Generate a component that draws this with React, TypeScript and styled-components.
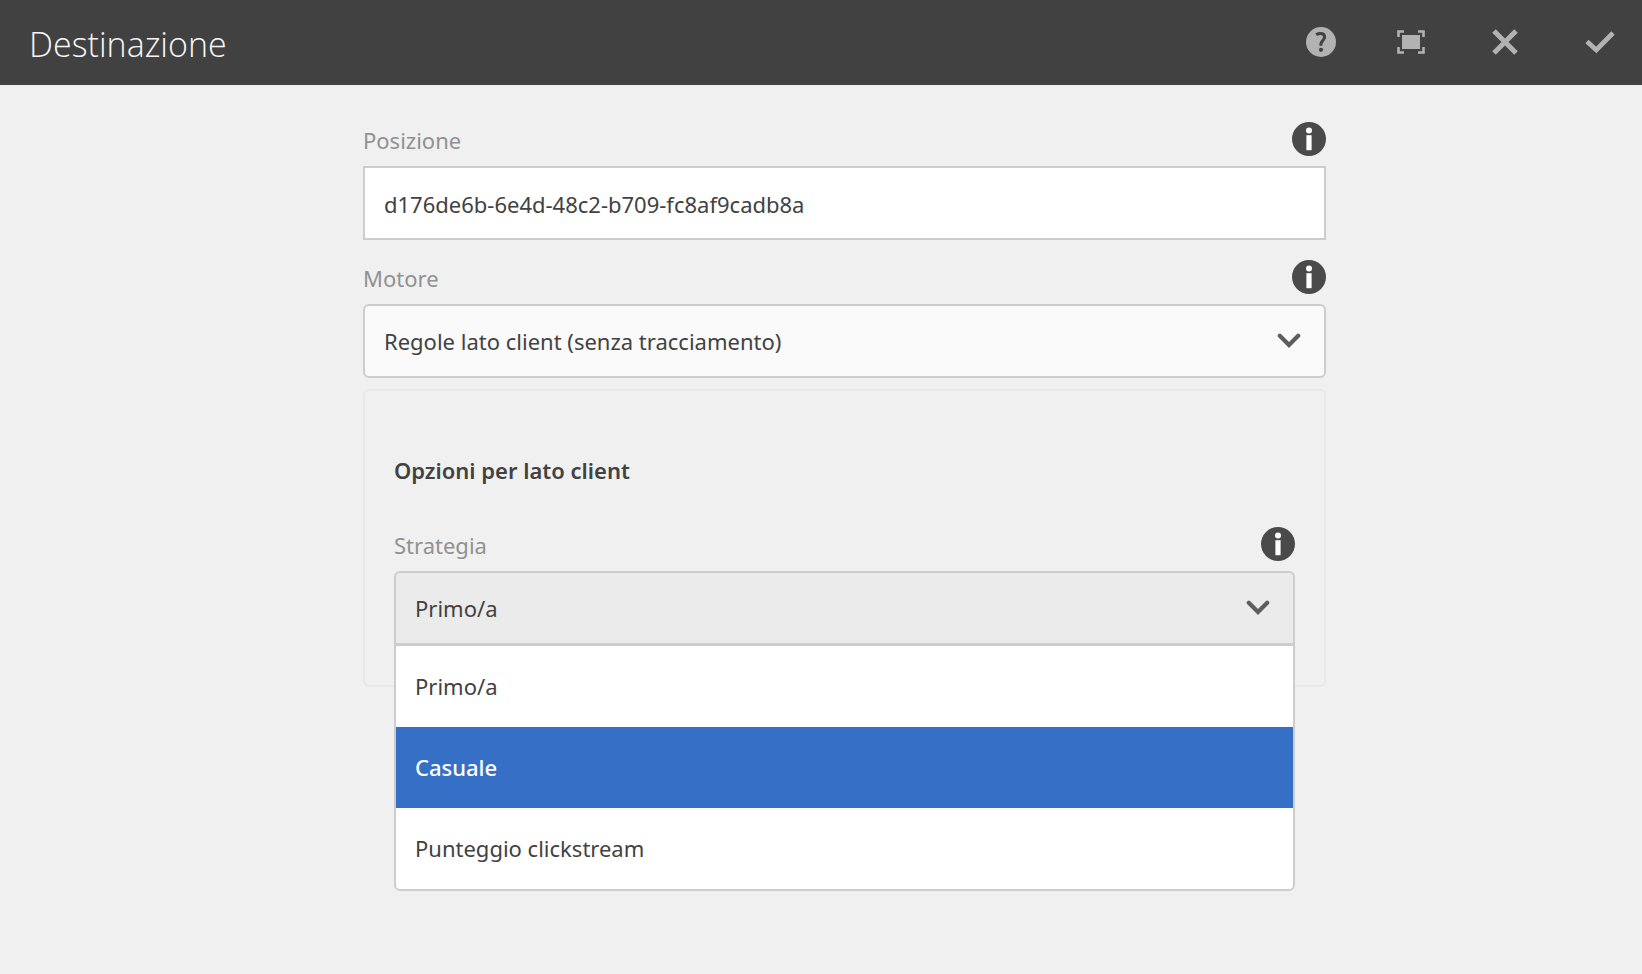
import React, { useState } from "react";
import styled, { createGlobalStyle } from "styled-components";

const GlobalStyle = createGlobalStyle`
  *, *::before, *::after { box-sizing: border-box; }
  body {
    margin: 0;
    background: #f0f0f0;
    color: #424242;
    font-family: "Noto Sans", "Open Sans", sans-serif;
    font-size: 22px;
    line-height: 30px;
  }
`;

const Page = styled.div`
  min-height: 100vh;
`;

const Header = styled.header`
  display: flex;
  align-items: center;
  justify-content: space-between;
  height: 85px;
  padding: 0 27px 2px 29px;
  background: #414141;
`;

const Title = styled.h1`
  margin: 0;
  padding-top: 4px;
  color: #f6f6f6;
  font-family: "Open Sans", "Noto Sans", sans-serif;
  font-size: 34px;
  font-weight: 300;
  line-height: 48px;
`;

const Actions = styled.div<{ $gap: number }>`
  display: flex;
  align-items: center;
  gap: ${({ $gap }) => $gap}px;
`;

const IconButton = styled.button`
  display: flex;
  padding: 0;
  border: 0;
  background: none;
  color: #b2b2b2;
  cursor: pointer;
`;

const Form = styled.form`
  display: flex;
  flex-direction: column;
  padding: 37px 316px 0 363px;
`;

const Field = styled.div`
  margin-bottom: 20px;
`;

const LabelRow = styled.div`
  display: flex;
  align-items: flex-start;
  justify-content: space-between;
  height: 44px;
`;

const Label = styled.label`
  padding-top: 3px;
  color: #919191;
`;

const InfoButton = styled(IconButton)`
  color: #4a4a4a;
`;

const TextInput = styled.input`
  display: block;
  width: 100%;
  height: 74px;
  padding: 2px 19px 0;
  border: 2px solid #cdcdcd;
  border-radius: 0;
  background: #fff;
  color: #424242;
  font: inherit;
  outline: none;
`;

const SelectBox = styled.div`
  position: relative;
  display: grid;
  align-items: center;

  > select,
  > svg {
    grid-area: 1 / 1;
  }

  > svg {
    justify-self: end;
    margin-right: 25px;
    pointer-events: none;
  }
`;

const Select = styled.select<{ $open?: boolean }>`
  width: 100%;
  height: 74px;
  padding: 0 56px 0 19px;
  border: 2px solid #cdcdcd;
  border-radius: ${({ $open }) => ($open ? "6px 6px 0 0" : "6px")};
  background: ${({ $open }) => ($open ? "#ebebeb" : "#fafafa")};
  color: #424242;
  font: inherit;
  appearance: none;
  outline: none;
`;

const Menu = styled.ul`
  position: absolute;
  top: 73px;
  left: 0;
  right: 0;
  margin: 0;
  padding: 0;
  border: 2px solid #cdcdcd;
  border-radius: 0 0 6px 6px;
  background: #fff;
  list-style: none;
`;

const Option = styled.li<{ $active: boolean }>`
  display: flex;
  align-items: center;
  height: 81px;
  padding: 0 19px 2px;
  background: ${({ $active }) => ($active ? "#3570c6" : "transparent")};
  color: ${({ $active }) => ($active ? "#fff" : "inherit")};
  font-weight: ${({ $active }) => ($active ? 500 : 400)};
  cursor: pointer;
`;

const Panel = styled.section`
  margin-top: -9px;
  padding: 64px 29px 20px;
  border: 2px solid #e8e8e8;
  border-radius: 6px;
`;

const PanelTitle = styled.h2`
  margin: 0 0 42px;
  font-size: 22px;
  font-weight: 600;
  line-height: 30px;
`;

const HelpIcon = () => (
  <svg width="30" height="30" viewBox="0 0 30 30" aria-hidden="true">
    <circle cx="15" cy="15" r="15" fill="currentColor" />
    <path
      d="M10.2 7.8C11.4 7 12.9 6.6 14.5 6.6C17.1 6.6 18.6 8 18.6 10.1C18.6 13.3 14.9 13.9 14.9 17.2V18.8"
      fill="none"
      stroke="#414141"
      strokeWidth="3"
    />
    <circle cx="15" cy="22.8" r="2.1" fill="#414141" />
  </svg>
);

const FullscreenIcon = () => (
  <svg width="28" height="24" viewBox="0 0 28 24" aria-hidden="true">
    <rect x="5" y="5" width="18" height="14" fill="currentColor" />
    <path
      d="M1.5 7V1.5H7M21 1.5H26.5V7M26.5 17V22.5H21M7 22.5H1.5V17"
      fill="none"
      stroke="currentColor"
      strokeWidth="2.6"
    />
  </svg>
);

const CloseIcon = () => (
  <svg width="26" height="26" viewBox="0 0 26 26" aria-hidden="true">
    <path d="M2 2L24 24M24 2L2 24" stroke="currentColor" strokeWidth="5" />
  </svg>
);

const CheckIcon = () => (
  <svg width="30" height="24" viewBox="0 0 30 24" aria-hidden="true">
    <path d="M2 11.5L11.3 20L28 3" fill="none" stroke="currentColor" strokeWidth="4.8" />
  </svg>
);

const InfoIcon = () => (
  <svg width="34" height="34" viewBox="0 0 34 34" aria-hidden="true">
    <circle cx="17" cy="17" r="17" fill="currentColor" />
    <circle cx="17" cy="8.4" r="3" fill="#fff" />
    <rect x="14.4" y="13.2" width="5.2" height="15" fill="#fff" />
  </svg>
);

const Chevron = () => (
  <svg width="24" height="16" viewBox="0 0 24 16" aria-hidden="true">
    <path
      d="M2.8 2.8L12 12L21.2 2.8"
      fill="none"
      stroke="#5e5e5e"
      strokeWidth="4.2"
      strokeLinecap="round"
    />
  </svg>
);

const FieldLabel = ({ id, children }: { id: string; children: string }) => (
  <LabelRow>
    <Label htmlFor={id}>{children}</Label>
    <InfoButton type="button" aria-label={`Informazioni: ${children}`}>
      <InfoIcon />
    </InfoButton>
  </LabelRow>
);

const strategies = ["Primo/a", "Casuale", "Punteggio clickstream"];

export default function App() {
  const [position, setPosition] = useState("d176de6b-6e4d-48c2-b709-fc8af9cadb8a");
  const [strategy, setStrategy] = useState(strategies[0]);
  const [active, setActive] = useState(1);

  return (
    <Page>
      <GlobalStyle />
      <Header>
        <Title>Destinazione</Title>
        <Actions $gap={67}>
          <Actions $gap={61}>
            <IconButton type="button" aria-label="Aiuto">
              <HelpIcon />
            </IconButton>
            <IconButton type="button" aria-label="Schermo intero">
              <FullscreenIcon />
            </IconButton>
          </Actions>
          <IconButton type="button" aria-label="Annulla">
            <CloseIcon />
          </IconButton>
          <IconButton type="button" aria-label="Fine">
            <CheckIcon />
          </IconButton>
        </Actions>
      </Header>
      <Form>
        <Field>
          <FieldLabel id="position">Posizione</FieldLabel>
          <TextInput
            id="position"
            value={position}
            onChange={(event) => setPosition(event.target.value)}
          />
        </Field>
        <Field>
          <FieldLabel id="engine">Motore</FieldLabel>
          <SelectBox>
            <Select id="engine">
              <option>Regole lato client (senza tracciamento)</option>
            </Select>
            <Chevron />
          </SelectBox>
        </Field>
        <Panel>
          <PanelTitle>Opzioni per lato client</PanelTitle>
          <Field>
            <FieldLabel id="strategy">Strategia</FieldLabel>
            <SelectBox>
              <Select
                id="strategy"
                $open
                value={strategy}
                onChange={(event) => setStrategy(event.target.value)}
              >
                {strategies.map((name) => (
                  <option key={name}>{name}</option>
                ))}
              </Select>
              <Chevron />
              <Menu role="listbox" aria-label="Strategia">
                {strategies.map((name, index) => (
                  <Option
                    key={name}
                    role="option"
                    aria-selected={name === strategy}
                    $active={index === active}
                    onMouseEnter={() => setActive(index)}
                    onClick={() => setStrategy(name)}
                  >
                    {name}
                  </Option>
                ))}
              </Menu>
            </SelectBox>
          </Field>
        </Panel>
      </Form>
    </Page>
  );
}
